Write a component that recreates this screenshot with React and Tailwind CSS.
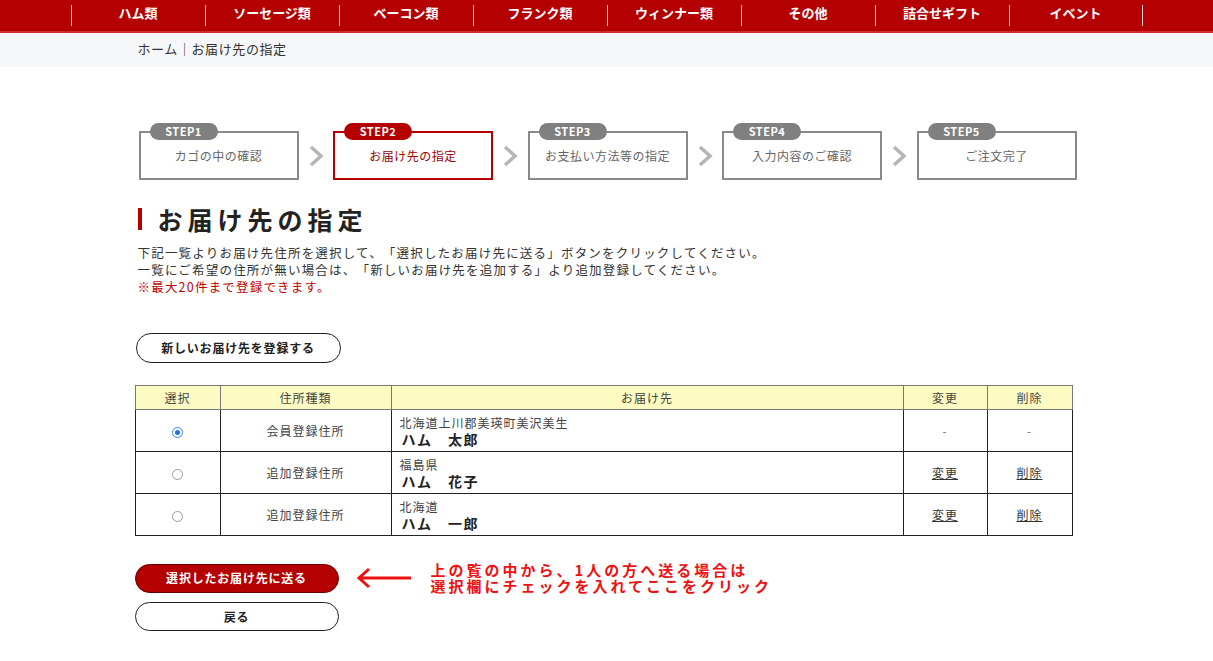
import React from "react";

const navItems = ["ハム類", "ソーセージ類", "ベーコン類", "フランク類", "ウィンナー類", "その他", "詰合せギフト", "イベント"];

const steps = [
    { no: "STEP1", label: "カゴの中の確認" },
    { no: "STEP2", label: "お届け先の指定", active: true },
    { no: "STEP3", label: "お支払い方法等の指定" },
    { no: "STEP4", label: "入力内容のご確認" },
    { no: "STEP5", label: "ご注文完了" },
];

const addresses = [
    { type: "会員登録住所", addr: "北海道上川郡美瑛町美沢美生", name: "ハム　太郎", checked: true, fixed: true },
    { type: "追加登録住所", addr: "福島県", name: "ハム　花子" },
    { type: "追加登録住所", addr: "北海道", name: "ハム　一郎" },
];

function Chevron() {
    return (
        <svg width="16" height="22" viewBox="0 0 16 22" className="shrink-0">
            <path d="M3 2 L13 11 L3 20" fill="none" stroke="#b5b5b5" strokeWidth="3.5" />
        </svg>
    );
}

export default function App() {
    return (
        <div className="min-h-[661px] bg-white text-[#333] [text-spacing-trim:space-all]" style={{ fontFamily: '"Noto Sans CJK JP", "Noto Sans", sans-serif' }}>
            {/* グローバルナビ */}
            <div className="bg-[#b40000] h-[33px] border-b-2 border-[#c9302c]">
                <ul className="w-[1072px] mx-auto flex h-full">
                    {navItems.map((n, i) => (
                        <li key={n} className={`w-[134px] flex items-center justify-center border-l border-white/80 my-[5px] text-white font-bold text-[13px] leading-none pb-[7px] ${i === navItems.length - 1 ? "border-r" : ""}`}>
                            {n}
                        </li>
                    ))}
                </ul>
            </div>

            {/* パンくず */}
            <div className="bg-[#f6f7f8] h-[34px]">
                <div className="w-[940px] mx-auto pl-[1px] flex items-center h-full text-[13px] text-[#333] tracking-[0.6px] pb-[2px]">
                    ホーム｜お届け先の指定
                </div>
            </div>

            <div className="w-[940px] mx-auto">
                {/* ステップ */}
                <div className="flex items-center justify-between mt-[64px] pl-[2px]">
                    {steps.map((s, i) => (
                        <React.Fragment key={s.no}>
                            <div className={`relative w-[160px] h-[49px] border-2 flex items-center justify-center text-[12px] tracking-[0.5px] ${s.active ? "border-[#b40000] text-[#a00000]" : "border-[#8a8a8a] text-[#666]"}`}>
                                <span className={`absolute -top-[10px] left-[9px] w-[68px] h-[17px] rounded-full flex items-center justify-center text-white text-[11px] font-bold tracking-[0.5px] ${s.active ? "bg-[#b40000]" : "bg-[#808080]"}`}>
                                    {s.no}
                                </span>
                                <span className="mt-[1px]">{s.label}</span>
                            </div>
                            {i < steps.length - 1 && <Chevron />}
                        </React.Fragment>
                    ))}
                </div>

                {/* 見出し */}
                <h1 className="mt-[28px] flex items-center h-[22px] pl-[1px]">
                    <span className="w-[4px] h-[22px] bg-[#b40000]" />
                    <span className="ml-[16px] text-[25px] font-bold text-[#222] tracking-[5px] leading-none">お届け先の指定</span>
                </h1>

                <div className="mt-[14px] pl-[1px] text-[12.5px] leading-[17px] tracking-[1.2px] text-[#333]">
                    <p>下記一覧よりお届け先住所を選択して、「選択したお届け先に送る」ボタンをクリックしてください。</p>
                    <p>一覧にご希望の住所が無い場合は、「新しいお届け先を追加する」より追加登録してください。</p>
                    <p className="text-[#c00000]">※最大20件まで登録できます。</p>
                </div>

                <button className="mt-[38px] -ml-[1px] w-[205px] h-[30px] rounded-full border border-[#222] bg-white text-[12px] font-bold text-[#222] tracking-[0.8px]">
                    新しいお届け先を登録する
                </button>

                {/* お届け先一覧 */}
                <table className="mt-[22px] -ml-[2px] w-[938px] border-collapse border border-[#222] text-[12px] tracking-[1px] text-[#444]">
                    <thead>
                        <tr className="bg-[#fdfbc2] h-[24px]">
                            <th className="w-[85px] font-normal border border-[#777]">選択</th>
                            <th className="w-[171px] font-normal border border-[#777]">住所種類</th>
                            <th className="w-[512px] font-normal border border-[#777]">お届け先</th>
                            <th className="w-[84px] font-normal border border-[#777]">変更</th>
                            <th className="font-normal border border-[#777]">削除</th>
                        </tr>
                    </thead>
                    <tbody>
                        {addresses.map((a, i) => (
                            <tr key={i} className="h-[42px]">
                                <td className="border border-[#222] text-center">
                                    <span className={`inline-block w-[11px] h-[11px] rounded-full border align-middle ${a.checked ? "border-[#3b82f6] bg-white p-[2px]" : "border-[#999] bg-white"}`}>
                                        {a.checked && <span className="block w-full h-full rounded-full bg-[#1a73e8]" />}
                                    </span>
                                </td>
                                <td className="border border-[#222] text-center">{a.type}</td>
                                <td className="border border-[#222] pl-[8px] align-middle">
                                    <div className="leading-[15px] pt-[1px]">{a.addr}</div>
                                    <div className="text-[14px] font-bold text-[#222] leading-[18px] tracking-[1.5px] pl-[2px]">{a.name}</div>
                                </td>
                                <td className="border border-[#222] text-center">
                                    {a.fixed ? <span className="text-[#777]">-</span> : <a className="underline text-[#333]">変更</a>}
                                </td>
                                <td className="border border-[#222] text-center">
                                    {a.fixed ? <span className="text-[#777]">-</span> : <a className="underline text-[#333]">削除</a>}
                                </td>
                            </tr>
                        ))}
                    </tbody>
                </table>

                {/* ボタン */}
                <div className="mt-[26px] -ml-[2px] flex items-center">
                    <button className="w-[204px] h-[29px] rounded-full bg-[#b40000] border border-[#600] text-white text-[12px] font-bold tracking-[0.8px]">
                        選択したお届け先に送る
                    </button>
                    <svg width="56" height="22" viewBox="0 0 56 22" className="ml-[17px]">
                        <path d="M55 11 H4 M13 2 L3 11 L13 20" fill="none" stroke="#ee1111" strokeWidth="3" />
                    </svg>
                    <div className="ml-[19px] text-[15px] font-bold text-[#ee1111] leading-[16px] tracking-[3px]">
                        <p>上の覧の中から、1人の方へ送る場合は</p>
                        <p>選択欄にチェックを入れてここをクリック</p>
                    </div>
                </div>
                <button className="mt-[8px] -ml-[2px] w-[204px] h-[29px] rounded-full bg-white border border-[#222] text-[#222] text-[12px] font-bold tracking-[0.8px]">
                    戻る
                </button>
            </div>
        </div>
    );
}
